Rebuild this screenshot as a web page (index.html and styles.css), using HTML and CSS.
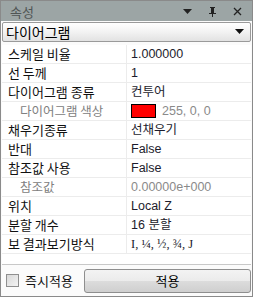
FILE: index.html
```html
<!DOCTYPE html>
<html>
<head>
    <title>속성</title>
    <link rel="stylesheet" href="styles.css">
</head>
<body>
    <div class="panel">
        <div class="titlebar">
            <span class="title">속성</span>
            <div class="tools">
                <svg width="11" height="11" viewBox="0 0 11 11"><path d="M1 3h9L5.5 8z" fill="#222"/></svg>
                <svg width="11" height="11" viewBox="0 0 11 11"><path d="M3 1h5v1H7v5h2v1H6v3H5V8H2V7h2V2H3z" fill="#222"/></svg>
                <svg width="11" height="11" viewBox="0 0 11 11"><path d="M2 2l7 7M9 2l-7 7" stroke="#222" stroke-width="1.3"/></svg>
            </div>
        </div>

        <div class="combo">
            <span>다이어그램</span>
            <svg width="9" height="6" viewBox="0 0 9 6"><path d="M0 0h9L4.5 5z" fill="#111"/></svg>
        </div>

        <div class="grid">
            <div class="row"><div class="name">스케일 비율</div><div class="value">1.000000</div></div>
            <div class="row"><div class="name">선 두께</div><div class="value">1</div></div>
            <div class="row"><div class="name">다이어그램 종류</div><div class="value">컨투어</div></div>
            <div class="row"><div class="name sub">다이어그램 색상</div><div class="value dim"><span class="swatch"></span>255, 0, 0</div></div>
            <div class="row"><div class="name">채우기종류</div><div class="value">선채우기</div></div>
            <div class="row"><div class="name">반대</div><div class="value">False</div></div>
            <div class="row"><div class="name">참조값 사용</div><div class="value">False</div></div>
            <div class="row"><div class="name sub">참조값</div><div class="value dim">0.00000e+000</div></div>
            <div class="row"><div class="name">위치</div><div class="value">Local Z</div></div>
            <div class="row"><div class="name">분할 개수</div><div class="value">16 분할</div></div>
            <div class="row"><div class="name">보 결과보기방식</div><div class="value serif">I, ¼, ½, ¾, J</div></div>
        </div>

        <div class="footer">
            <label class="check"><span class="box"></span>즉시적용</label>
            <button class="apply">적용</button>
        </div>
    </div>
</body>
</html>
```

FILE: styles.css
```css
body {
    margin: 0;
    font-family: "Noto Sans CJK KR", "DejaVu Sans", sans-serif;
    font-size: 13px;
    color: #111;
    background: #fff;
}

.panel {
    width: 253px;
    height: 297px;
    box-sizing: border-box;
    border: 1px solid #8a8a8a;
    background: #fbfbfb;
    display: flex;
    flex-direction: column;
}

.titlebar {
    height: 20px;
    background: #9ca5a5;
    display: flex;
    align-items: center;
    justify-content: space-between;
    padding: 0 9px 0 9px;
}

.title {
    color: #505555;
    font-size: 13px;
}

.tools {
    display: flex;
    gap: 14px;
    align-items: center;
}

.combo {
    margin: 1px 1px 0 1px;
    height: 18px;
    border: 1px solid #9a9a9a;
    border-radius: 2px;
    background: linear-gradient(#ffffff, #f4f4f4 45%, #e2e2e2);
    display: flex;
    align-items: center;
    justify-content: space-between;
    padding: 0 6px 0 3px;
    font-size: 14px;
    color: #000;
}

.grid {
    margin: 3px 1px 0 1px;
    height: 219px;
    border-bottom: 1px solid #c8c8c8;
    background: #fff;
}

.row {
    display: flex;
    height: 18px;
    border-bottom: 1px solid #ececec;
}

.name {
    width: 118px;
    padding-left: 6px;
    border-right: 1px solid #ececec;
    line-height: 18px;
    white-space: nowrap;
    overflow: hidden;
    color: #111;
}

.name.sub {
    padding-left: 18px;
    width: 106px;
    font-size: 12.5px;
    color: #808080;
}

.value {
    flex: 1;
    padding-left: 4px;
    line-height: 18px;
    font-family: "Liberation Sans", "Noto Sans CJK KR", sans-serif;
    font-size: 12.5px;
    color: #1c1c2c;
    display: flex;
    align-items: center;
}

.value.dim {
    color: #8a8a8a;
}

.value.serif {
    font-family: "Liberation Serif", "Noto Sans CJK KR", serif;
    font-size: 12.5px;
}

.swatch {
    width: 23px;
    height: 12px;
    background: #ff0000;
    border: 1px solid #000;
    margin-right: 6px;
}

.footer {
    flex: 1;
    display: flex;
    align-items: center;
    padding: 0 1px 0 5px;
    gap: 6px;
}

.check {
    display: flex;
    align-items: center;
    gap: 6px;
    width: 72px;
    font-size: 13px;
}

.box {
    width: 11px;
    height: 11px;
    border: 1px solid #8f8f8f;
    background: linear-gradient(135deg, #d8d8d8, #f4f4f4);
}

.apply {
    flex: 1;
    height: 24px;
    border: 1px solid #8e8e8e;
    border-radius: 3px;
    background: linear-gradient(#f3f3f3, #ebebeb 50%, #dcdcdc 51%, #cfcfcf);
    font-family: "Noto Sans CJK KR", sans-serif;
    font-size: 13px;
    color: #000;
    padding: 0;
}
```
